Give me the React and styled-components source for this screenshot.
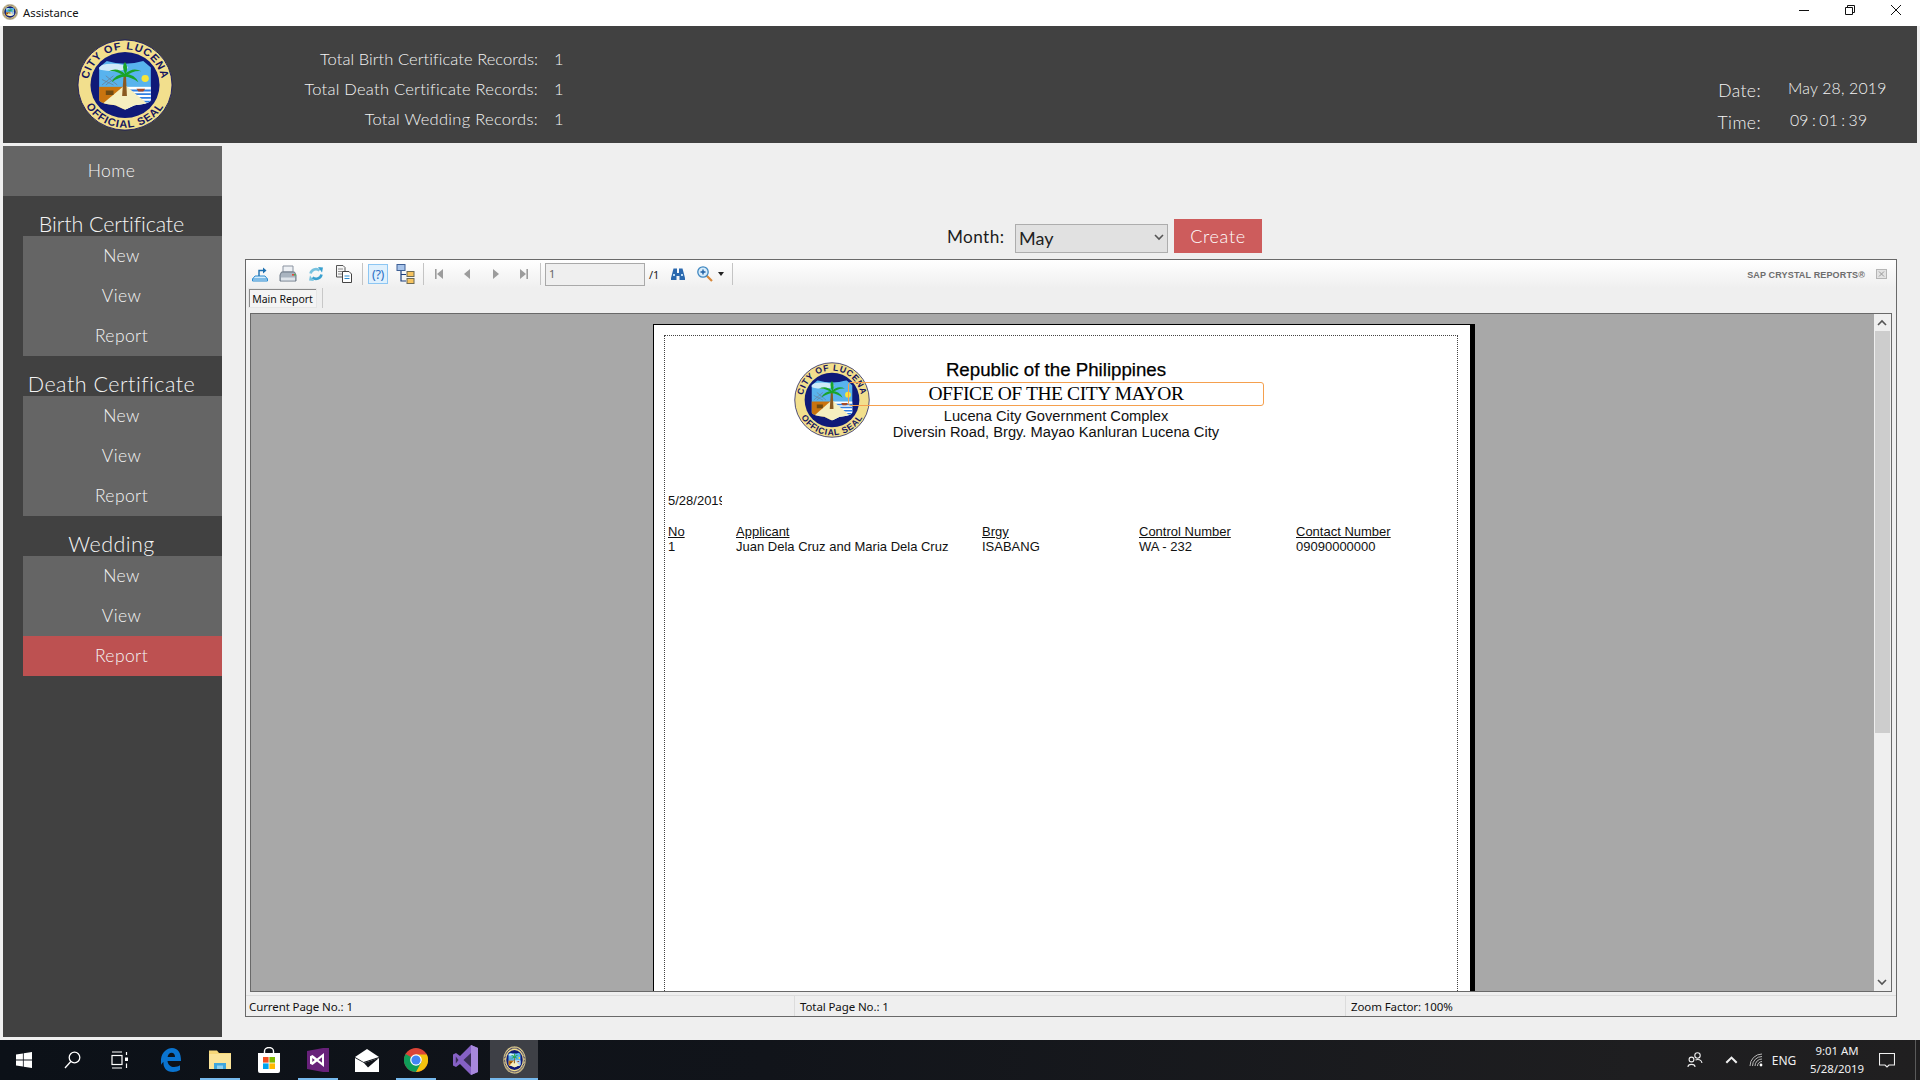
import React, { useId } from "react";
import styled, { createGlobalStyle } from "styled-components";

const Global = createGlobalStyle`
  html, body { margin: 0; padding: 0; background: #efefef; overflow: hidden; }
  #root { width: 1920px; height: 1080px; }
  * { box-sizing: border-box; }
`;

const GOTHIC = `"Lato", "Open Sans", sans-serif`;
const UI = `"Noto Sans", "Open Sans", sans-serif`;
const ARIAL = `"Liberation Sans", Arial, sans-serif`;

const Screen = styled.div`
  width: 1920px; height: 1080px; display: flex; flex-direction: column;
  background: #efefef; overflow: hidden;
`;
const TitleBar = styled.div`
  height: 26px; flex: none; background: #fff; display: flex; align-items: center;
  padding: 0 1px 2px 2px; font: 11.3px ${UI}; color: #111;
`;
const TitleIcon = styled.span`
  width: 16px; height: 16px; display: block; margin-right: 5px;
`;
const WinControls = styled.div`
  margin-left: auto; display: flex; height: 100%;
`;
const WinBtn = styled.div`
  width: 46px; height: 100%; display: flex; align-items: center; justify-content: center;
  svg { margin-top: -4px; }
`;
const Header = styled.header`
  height: 117px; flex: none; margin: 0 3px 3px; background: #414141; display: flex; align-items: flex-start;
  color: #f4f4f4; font: 300 16.5px ${GOTHIC};
`;
const HeaderLogo = styled.div`
  width: 96px; height: 92px; margin: 13px 0 0 74px; flex: none;
`;
const Stats = styled.div`
  margin-top: 18px; display: grid; grid-template-columns: 365px auto; column-gap: 16px; grid-auto-rows: 30px; align-items: center;
`;
const StatLabel = styled.div`
  text-align: right; letter-spacing: ${p => p.$track}px;
`;
const Clock = styled.div`
  margin: 48px 30px 0 auto; display: grid; grid-template-columns: 44px 99px; column-gap: 27px; grid-auto-rows: 32px; align-items: center;
`;
const ClockLabel = styled.div`
  text-align: right; font-size: 17.5px; letter-spacing: 0.4px;
`;
const ClockValue = styled.div`
  margin-top: -6px; padding-left: ${p => p.$indent || 0}px; font-size: 15.8px; letter-spacing: 0.2px; word-spacing: ${p => p.$words || 0}px; white-space: nowrap;
`;
const Body = styled.div`
  flex: 1; min-height: 0; display: flex;
`;
const Sidebar = styled.nav`
  width: 219px; height: 891px; margin-left: 3px; flex: none; background: #414141; color: #f4f4f4;
`;
const HomeItem = styled.div`
  height: 50px; background: #656565; display: flex; align-items: center; justify-content: center;
  padding: 0 2px 2px 0; font: 300 17.5px ${GOTHIC}; letter-spacing: 0.4px;
`;
const SectionTitle = styled.div`
  height: 40px; display: flex; align-items: flex-end; justify-content: center;
  padding-right: 2px; font: 300 21.5px/23px ${GOTHIC}; letter-spacing: ${p => p.$track}px;
`;
const SubMenu = styled.div`
  margin-left: 20px; background: #656565;
`;
const SubItem = styled.div`
  height: 40px; display: flex; align-items: center; justify-content: center;
  padding: 0 2px 1px 0; font: 300 17.5px ${GOTHIC}; letter-spacing: 0.4px;
  background: ${p => (p.$active ? "#bd5151" : "transparent")};
`;
const Main = styled.main`
  flex: 1; min-width: 0; display: flex; flex-direction: column; padding: 73px 23px 0 23px;
`;
const MonthRow = styled.div`
  height: 34px; flex: none; display: flex; align-items: center; padding-left: 702px; margin-bottom: 6px;
`;
const MonthLabel = styled.div`
  width: 68px; font: 400 17.2px ${GOTHIC}; color: #1c1c1c; letter-spacing: 0.4px;
`;
const Select = styled.div`
  width: 153px; height: 29px; margin-top: 4px; background: #e1e1e1; border: 1px solid #adadad; display: flex; align-items: center;
  justify-content: space-between; padding: 0 3px 1px 3px; font: 400 18px ${GOTHIC}; color: #222;
`;
const CreateBtn = styled.div`
  width: 88px; height: 34px; margin-left: 6px; background: #cd5c5c; color: #fff; display: flex; align-items: center; justify-content: center;
  font: 300 18px ${GOTHIC}; letter-spacing: 0.7px;
`;
const Viewer = styled.section`
  width: 1652px; height: 758px; flex: none; border: 1px solid #696969; display: flex; flex-direction: column;
  background: #efefef;
`;
const Toolbar = styled.div`
  height: 28px; flex: none; display: flex; align-items: center; padding-right: 9px;
  background: linear-gradient(#ffffff, #efefef);
  font: 11px ${UI}; color: #222;
`;
const Tool = styled.div`
  width: ${p => p.$w}px; height: 100%; flex: none; display: flex; align-items: center; justify-content: center;
`;
const ToolSep = styled.div`
  width: ${p => p.$w}px; flex: none; height: 22px; display: flex; justify-content: center;
  &::before { content: ""; width: 1px; height: 100%; background: #c4c4c4; }
`;
const PageInput = styled.div`
  width: 100px; height: 23px; flex: none; border: 1px solid #a9a9a9; background: #efefef; padding-left: 3px; font: 11px/19px ${UI}; color: #666;
`;
const PageTotal = styled.div`
  width: 18px; flex: none; padding-left: 4px; font: 11px ${UI};
`;
const Brand = styled.div`
  margin: 2px 11px 0 auto; font: bold 9px ${ARIAL}; color: #6d6d6d; letter-spacing: 0.15px; white-space: nowrap;
`;
const TabRow = styled.div`
  height: 25px; flex: none; display: flex; padding-left: 2px; align-items: flex-start;
`;
const Tab = styled.div`
  width: 69px; height: 20px; border: 1px solid #e6e6e6; box-shadow: inset 1px 1px 0 #8a8a8a;
  background: #f4f4f4; display: flex; align-items: center; justify-content: center; padding-top: 1px; font: 10.5px ${UI}; color: #111;
`;
const TabSep = styled.div`
  width: 1px; height: 20px; margin-left: 5px; background: #c8c8c8;
`;
const Pane = styled.div`
  height: 679px; flex: none; margin: 0 4px; border: 1px solid #696969; display: flex; overflow: hidden; background: #a8a8a8;
`;
const PaneCanvas = styled.div`
  flex: 1; min-width: 0; padding: 10px 0 0 402px; overflow: hidden;
`;
const Page = styled.div`
  width: 822px; height: 900px; background: #fff; border: 1px solid #000; border-right: 5px solid #000; padding: 10px 10px 0;
`;
const Sheet = styled.div`
  width: 794px; height: 900px; border: 1px dotted #444; padding-left: 3px; font: 13px ${ARIAL}; color: #111;
`;
const ReportHead = styled.div`
  position: relative; height: 104px; margin-left: -3px; padding: 24px 0 0 183px;
`;
const ReportSeal = styled.div`
  position: absolute; left: 129px; top: 26px; width: 76px; height: 76px;
`;
const HeadLines = styled.div`
  position: relative; width: 416px; display: flex; flex-direction: column; align-items: center;
`;
const Republic = styled.div`
  height: 22px; font: 18.7px/20px ${ARIAL}; -webkit-text-stroke: 0.25px #000; color: #000; white-space: nowrap;
`;
const OfficeBox = styled.div`
  width: 416px; height: 24px; border: 1px solid #f5a04e; border-radius: 3px; display: flex; align-items: center; justify-content: center;
  font: 19.5px "Liberation Serif", "Times New Roman", serif; color: #000; letter-spacing: -0.4px; white-space: nowrap;
`;
const AddressLine = styled.div`
  height: 16px; margin-top: ${p => p.$top || 0}px; font: 14.7px/17px ${ARIAL}; color: #111; white-space: nowrap;
`;
const ReportDate = styled.div`
  width: 54px; height: 14px; margin-top: 54px; overflow: hidden; white-space: nowrap; line-height: 14px;
`;
const Row = styled.div`
  display: grid; grid-template-columns: 68px 246px 157px 157px 1fr; height: 14px; line-height: 14px; white-space: nowrap;
  margin-top: ${p => p.$top || 0}px;
  text-decoration: ${p => (p.$head ? "underline" : "none")};
`;
const Scrollbar = styled.div`
  width: 17px; flex: none; background: #efefef; display: flex; flex-direction: column; align-items: center; border-right: 1px solid #efefef;
`;
const ScrollBtn = styled.div`
  height: 17px; flex: none; display: flex; align-items: center; justify-content: center; margin-top: ${p => p.$auto ? "auto" : "0"};
`;
const Thumb = styled.div`
  width: 15px; height: 402px; background: #cdcdcd;
`;
const StatusBar = styled.div`
  flex: 1; display: grid; grid-template-columns: 548px 551px 1fr; margin-top: 3px; border-top: 1px solid #dcdcdc; font: 11.5px ${UI}; color: #111; align-items: stretch;
`;
const StatusCell = styled.div`
  display: flex; align-items: center; padding-left: 3px; letter-spacing: -0.1px;
  & + & { border-left: 1px solid #dcdcdc; padding-left: 5px; }
`;
const Gap = styled.div`
  height: 3px; flex: none; background: #efefef;
`;
const Taskbar = styled.footer`
  height: 40px; flex: none; display: flex; align-items: stretch;
  background: linear-gradient(90deg, #0c1118 0%, #11141a 40%, #1e1e20 85%, #201f20 100%);
  color: #f0f0f0; font: 12px ${UI};
`;
const TaskSlot = styled.div`
  position: relative; width: ${p => p.$w}px; flex: none; display: flex; align-items: center; justify-content: center;
  background: ${p => (p.$active ? "#3e4046" : "transparent")};
  margin-left: ${p => p.$ml || 0}px;
`;
const TaskSeal = styled.span`
  width: 23px; height: 28px; display: block;
`;
const RunMark = styled.span`
  position: absolute; bottom: 0; left: 50%; transform: translateX(-50%); width: ${p => p.$full ? "100%" : "40px"}; height: 2px; background: #76b9ed;
`;
const Tray = styled.div`
  margin-left: auto; display: flex; align-items: stretch;
`;
const TrayClock = styled.div`
  width: 74px; display: flex; flex-direction: column; align-items: center; justify-content: center; font: 11.4px/18px ${UI}; white-space: nowrap;
`;
const DesktopEdge = styled.div`
  width: 5px; margin-left: 15px; border-left: 1px solid #5a5a5a;
`;

function Seal({ plain }) {
  const id = useId().replace(/[^a-zA-Z0-9]/g, "");
  return (
    <svg viewBox="0 0 100 100" width="100%" height="100%" preserveAspectRatio="none" style={{ display: "block" }}>
      <defs>
        <clipPath id={`s${id}`}>
          <path d="M23 31 L31 24 Q50 30 69 24 L77 31 L77 66 Q77 70 60 72 L50 77 L40 72 Q23 70 23 66 Z" />
        </clipPath>
        <path id={`t${id}`} d="M12 56 A38.5 38.5 0 1 1 88 56" />
        <path id={`b${id}`} d="M3.5 50 A46.5 46.5 0 0 0 96.5 50" />
      </defs>
      <circle cx="50" cy="50" r="49" fill="#f2df8d" stroke="#1c1c5e" strokeWidth="1" />
      <circle cx="50" cy="50" r="36" fill="#0f1a78" />
      {plain ? (
        <circle cx="50" cy="50" r="42.5" fill="none" stroke="#1c1c5e" strokeWidth="5" strokeDasharray="3 2" />
      ) : (
        <g fontFamily={ARIAL} fontWeight="bold" fontSize="11.5" fill="#15155f">
          <text letterSpacing="0.9"><textPath href={`#t${id}`} startOffset="50%" textAnchor="middle">CITY OF LUCENA</textPath></text>
          <text letterSpacing="0.9"><textPath href={`#b${id}`} startOffset="50%" textAnchor="middle">OFFICIAL SEAL</textPath></text>
        </g>
      )}
      <g clipPath={`url(#s${id})`}>
        <rect x="20" y="20" width="60" height="60" fill="#58b3ee" />
        <ellipse cx="37" cy="31" rx="16" ry="4" fill="#cfeaf8" />
        <rect x="20" y="52" width="30" height="30" fill="#c9740f" />
        <rect x="50" y="52" width="30" height="30" fill="#fff" />
        <path d="M50 56h30M50 60h30M50 64h30M50 68h30" stroke="#2f7fe0" strokeWidth="2" />
        <path d="M50 50 L82 78 L18 78 Z" fill="#f5efc0" />
        <path d="M26 50 L38 40 M30 50 L40 42 M26 44 L38 50 M30 40 L42 50" stroke="#6b7d92" strokeWidth="0.8" />
        <circle cx="71" cy="43" r="3.8" fill="#f6e53a" />
        <path d="M62 54h9l-2 3h-5z" fill="#a34a2a" />
        <path d="M30 56h8v5h-8z" fill="#6e4a12" />
      </g>
      <path d="M48.5 40 L47 62 L52 62 L51 40 Z" fill="#8a5a20" />
      <g fill="#19a42a">
        <path d="M50 38 Q42 30 33 35 Q42 34 50 41 Z" />
        <path d="M50 38 Q58 30 67 35 Q58 34 50 41 Z" />
        <path d="M50 38 Q40 38 36 47 Q44 41 50 41 Z" />
        <path d="M50 38 Q60 38 64 47 Q56 41 50 41 Z" />
        <path d="M50 38 Q46 29 50 25 Q54 30 51 38 Z" />
      </g>
    </svg>
  );
}

const ExportIcon = () => (
  <svg width="20" height="20" viewBox="0 0 20 20" fill="none">
    <path d="M2.5 15 L5 12 H15 L17.5 15 V17 H2.5 Z" fill="#d5ecfb" stroke="#2b8bd0" />
    <path d="M2.5 15 H17.5" stroke="#2b8bd0" />
    <path d="M9 12 V6.5 H13" stroke="#1c6fb0" strokeWidth="1.4" />
    <path d="M13 3.5 L16.5 6.5 L13 9.5 Z" fill="#1c6fb0" />
  </svg>
);
const PrintIcon = () => (
  <svg width="20" height="20" viewBox="0 0 20 20">
    <path d="M5 2 H15 V8 H5 Z" fill="#eef1f5" stroke="#8a93a0" />
    <path d="M3.5 8 H16.5 L18 11 V17 H2 V11 Z" fill="#a9b4c0" stroke="#6f7b88" />
    <rect x="3" y="13.5" width="14" height="3" fill="#dfe5eb" />
    <rect x="14" y="10" width="2" height="1.6" fill="#e2483c" />
    <rect x="16" y="10" width="1.6" height="1.6" fill="#4caf50" />
  </svg>
);
const RefreshIcon = () => (
  <svg width="20" height="20" viewBox="0 0 20 20" fill="none" stroke="#39a0cf" strokeWidth="2.6">
    <path d="M4.5 9.5 A5.5 5.5 0 0 1 13.5 6.5" stroke="#78c2df" />
    <path d="M12 3 L17 3.5 L16 8.5 Z" fill="#39a0cf" stroke="none" />
    <path d="M15.5 10.5 A5.5 5.5 0 0 1 6.5 13.5" />
    <path d="M8 17 L3 16.5 L4 11.5 Z" fill="#78c2df" stroke="none" />
  </svg>
);
const CopyIcon = () => (
  <svg width="20" height="20" viewBox="0 0 20 20">
    <path d="M2.5 1.5 H9 L11 3.5 V13 H2.5 Z" fill="#f5f5f5" stroke="#555" />
    <path d="M4 5h5M4 7.5h5M4 10h4" stroke="#8a8a8a" />
    <path d="M8.5 7.5 H15 L17.5 10 V18.5 H8.5 Z" fill="#fff" stroke="#444" />
    <path d="M10.5 12h5M10.5 14.5h5" stroke="#2b8bd0" />
  </svg>
);
const HelpBox = styled.div`
  width: 20px; height: 20px; border: 1px solid #8cc6f3; background: #dff0fd; color: #2d6fc4; display: flex; align-items: center; justify-content: center;
  font: 12.5px ${UI}; letter-spacing: -0.3px;
`;
const TreeIcon = () => (
  <svg width="20" height="22" viewBox="0 0 20 22">
    <path d="M5 8 V18 H10 M5 11.5 H10" fill="none" stroke="#1d3f7a" strokeWidth="1.2" />
    <rect x="1" y="1.5" width="8" height="6" fill="#a8c4ea" stroke="#3d5f95" />
    <rect x="11" y="8.5" width="7" height="5" fill="#f6c35f" stroke="#6c6a55" />
    <rect x="11" y="15.5" width="7" height="5" fill="#f6c35f" stroke="#6c6a55" />
  </svg>
);
const NavIcon = ({ dir, bar }) => (
  <svg width="10" height="12" viewBox="0 0 10 12" fill="#9c9c9c">
    <g transform={dir === "l" ? "" : "translate(10 0) scale(-1 1)"}>
      {bar && <rect x="1" y="1" width="1.6" height="10" />}
      <path d={bar ? "M9 1 V11 L3 6 Z" : "M8 1 V11 L2 6 Z"} />
    </g>
  </svg>
);
const BinocularIcon = () => (
  <svg width="16" height="16" viewBox="0 0 16 16" fill="#2a68ae">
    <path d="M3.5 2.5 H7 V7 H9 V2.5 H12.5 L15 12 V14 H9.5 V10 H6.5 V14 H1 V12 Z" />
    <path d="M3 9h2M11 9h2" stroke="#bcdcf6" strokeWidth="2" />
  </svg>
);
const ZoomIcon = () => (
  <svg width="18" height="18" viewBox="0 0 18 18" fill="none">
    <path d="M10 10 L16 16" stroke="#d8883a" strokeWidth="2.2" />
    <circle cx="7" cy="7" r="5.2" fill="#d8ecfa" stroke="#3f87c0" strokeWidth="1.3" />
    <path d="M4.5 7 H9.5 M7 4.5 V9.5" stroke="#1c5ea4" strokeWidth="1.4" />
  </svg>
);
const Caret = () => (
  <svg width="6" height="4" viewBox="0 0 6 4"><path d="M0 0 H6 L3 4 Z" fill="#222" /></svg>
);
const Chevron = ({ up, color = "#555", w = 10 }) => (
  <svg width={w} height={w * 0.7} viewBox="0 0 10 7" fill="none" stroke={color} strokeWidth="1.6">
    <path d={up ? "M1 6 L5 2 L9 6" : "M1 1 L5 5 L9 1"} />
  </svg>
);

const WinLogo = () => (
  <svg width="16" height="16" viewBox="0 0 16 16" fill="#fff">
    <path d="M0 2.4 L6.9 1.4 V7.6 H0 Z M7.7 1.3 L16 0 V7.6 H7.7 Z M0 8.4 H6.9 V14.6 L0 13.6 Z M7.7 8.4 H16 V16 L7.7 14.7 Z" />
  </svg>
);
const SearchGlyph = () => (
  <svg width="17" height="18" viewBox="0 0 17 18" fill="none" stroke="#fff" strokeWidth="1.3">
    <circle cx="10.5" cy="6.5" r="5.3" />
    <path d="M6.8 10.5 L1 17" />
  </svg>
);
const TaskViewGlyph = () => (
  <svg width="17" height="18" viewBox="0 0 17 18" fill="none" stroke="#fff" strokeWidth="1.2">
    <path d="M1 1 H11 M1 17 H11" />
    <rect x="1" y="4.5" width="10" height="9" />
    <rect x="14" y="6.5" width="3" height="3.5" fill="#fff" stroke="none" />
    <path d="M15.5 1 V4 M15.5 12.5 V17" />
  </svg>
);
const EdgeGlyph = () => (
  <svg width="22" height="24" viewBox="0 0 22 24">
    <path fill="#0a74d0" d="M1 11 C2 4 7 0 12 0 C18 0 21 5 21 13 H7.5 C8 17 11 19 14 19 C16.5 19 18.5 18.3 20 17.3 V22 C18 23.3 15.5 24 13 24 C6 24 3 19 3.5 14 C2.6 14.7 1.6 15.6 1 17 Z M7.6 9 H15 C15 6.4 13.8 4.7 11.5 4.7 C9.5 4.7 8 6.4 7.6 9 Z" />
  </svg>
);
const FolderGlyph = () => (
  <svg width="22" height="22" viewBox="0 0 22 22">
    <path d="M0 1.5 H8 L10 4 H22 V20 H0 Z" fill="#f6d778" />
    <path d="M0 5 H22 V20 H0 Z" fill="#fbe499" />
    <path d="M5 20 V14 H17 V20 Z" fill="#3fa6dd" />
    <path d="M8 20 V16.5 H14 V20 Z" fill="#8ed0ef" />
  </svg>
);
const StoreGlyph = () => (
  <svg width="24" height="26" viewBox="0 0 24 26">
    <path d="M7.5 6 V4 A4.5 3.5 0 0 1 16.5 4 V6" fill="none" stroke="#fff" strokeWidth="1.4" />
    <path d="M1 6 H23 V24 Q23 26 21 26 H3 Q1 26 1 24 Z" fill="#fff" />
    <rect x="6" y="10" width="5.6" height="5.6" fill="#f25022" />
    <rect x="12.4" y="10" width="5.6" height="5.6" fill="#7fba00" />
    <rect x="6" y="16.4" width="5.6" height="5.6" fill="#00a4ef" />
    <rect x="12.4" y="16.4" width="5.6" height="5.6" fill="#ffb900" />
  </svg>
);
const VSDarkGlyph = () => (
  <svg width="22" height="24" viewBox="0 0 22 24">
    <path d="M0 3 L16 0 H22 V24 H16 L0 21 Z" fill="#68217a" />
    <path d="M17 5 L10 10.5 L5.5 7 L3 8.2 V15.8 L5.5 17 L10 13.5 L17 19 Z M5.3 10 L7.8 12 L5.3 14 Z M11.5 12 L15 9.3 V14.7 Z" fill="#fff" fillRule="evenodd" />
  </svg>
);
const MailGlyph = () => (
  <svg width="24" height="23" viewBox="0 0 24 23">
    <path d="M0 8 L12 0 L24 8 L8.5 13 Z" fill="#fff" />
    <path d="M0 9 L9 14 L24 9 V23 H0 Z" fill="#fff" />
    <path d="M9 14 L24 9 L13 18.5 Z" fill="#11141a" />
  </svg>
);
const ChromeGlyph = () => (
  <svg width="24" height="24" viewBox="0 0 24 24">
    <circle cx="12" cy="12" r="12" fill="#db4437" />
    <path d="M12 12 L1.6 6 A12 12 0 0 0 12 24 L18 14 Z" fill="#0f9d58" />
    <path d="M12 6.5 H22.8 A12 12 0 0 1 12 24 L18 13 Z" fill="#f4c20d" />
    <circle cx="12" cy="12" r="5.8" fill="#fff" />
    <circle cx="12" cy="12" r="4.6" fill="#4285f4" />
  </svg>
);
const VSGlyph = () => (
  <svg width="25" height="30" viewBox="0 0 25 30">
    <path d="M18 0 L25 3 V27 L18 30 L7 19 L3 22 L0 20.5 V9.5 L3 8 L7 11 Z" fill="#8661c5" />
    <path d="M18 8 V22 L10.5 15 Z M2.8 11.5 L5.5 15 L2.8 18.5 Z" fill="#11141a" opacity=".65" />
    <path d="M18 0 L25 3 V27 L18 30 Z" fill="#a788dc" />
  </svg>
);
const PeopleGlyph = () => (
  <svg width="16" height="16" viewBox="0 0 16 16" fill="none" stroke="#f0f0f0" strokeWidth="1.1">
    <circle cx="10.5" cy="3.5" r="2.7" />
    <circle cx="4.5" cy="7.5" r="2.4" />
    <path d="M1 15 C1 11.5 8 11.5 8 15 M8.5 8 C11 6.8 14.5 7.8 15 11" />
  </svg>
);
const WifiGlyph = () => (
  <svg width="14" height="14" viewBox="0 0 14 14" fill="none" stroke="#b8b8b8" strokeWidth="1">
    <path d="M1 13 A12 12 0 0 1 13 1 M3.5 13 A9.5 9.5 0 0 1 13 3.5 M6 13 A7 7 0 0 1 13 6 M8.5 13 A4.5 4.5 0 0 1 13 8.5" />
    <circle cx="12" cy="12" r="1.4" fill="#fff" stroke="none" />
  </svg>
);
const BubbleGlyph = () => (
  <svg width="16" height="15" viewBox="0 0 16 15" fill="none" stroke="#f0f0f0" strokeWidth="1.1">
    <path d="M.5.5 H15.5 V12 H10 L8 14 L6 12 H.5 Z" />
  </svg>
);

const SECTIONS = [
  { title: "Birth Certificate", track: -0.1 },
  { title: "Death Certificate", track: 0.5 },
  { title: "Wedding", track: 0.45, active: "Report" },
];

export default function App() {
  return (
    <Screen>
      <Global />
      <TitleBar>
        <TitleIcon><Seal plain /></TitleIcon>
        Assistance
        <WinControls>
          <WinBtn>
            <svg width="10" height="1" viewBox="0 0 10 1"><path d="M0 .5 H10" stroke="#111" /></svg>
          </WinBtn>
          <WinBtn>
            <svg width="10" height="10" viewBox="0 0 10 10" fill="none" stroke="#111"><path d="M.5 2.5 H7.5 V9.5 H.5 Z M2.5 2.5 V.5 H9.5 V7.5 H7.5" /></svg>
          </WinBtn>
          <WinBtn>
            <svg width="10" height="10" viewBox="0 0 10 10" stroke="#111"><path d="M0 0 L10 10 M10 0 L0 10" /></svg>
          </WinBtn>
        </WinControls>
      </TitleBar>
      <Header>
        <HeaderLogo><Seal /></HeaderLogo>
        <Stats>
          <StatLabel $track={0.06}>Total Birth Certificate Records:</StatLabel><div>1</div>
          <StatLabel $track={0.26}>Total Death Certificate Records:</StatLabel><div>1</div>
          <StatLabel $track={0.3}>Total Wedding Records:</StatLabel><div>1</div>
        </Stats>
        <Clock>
          <ClockLabel>Date:</ClockLabel><ClockValue>May 28, 2019</ClockValue>
          <ClockLabel>Time:</ClockLabel><ClockValue $indent={2} $words={-1.2}>09 : 01 : 39</ClockValue>
        </Clock>
      </Header>
      <Body>
        <Sidebar>
          <HomeItem>Home</HomeItem>
          {SECTIONS.map(s => (
            <div key={s.title}>
              <SectionTitle $track={s.track}>{s.title}</SectionTitle>
              <SubMenu>
                {["New", "View", "Report"].map(i => (
                  <SubItem key={i} $active={s.active === i}>{i}</SubItem>
                ))}
              </SubMenu>
            </div>
          ))}
        </Sidebar>
        <Main>
          <MonthRow>
            <MonthLabel>Month:</MonthLabel>
            <Select>May<Chevron color="#555" /></Select>
            <CreateBtn>Create</CreateBtn>
          </MonthRow>
          <Viewer>
            <Toolbar>
              <Tool $w={28}><ExportIcon /></Tool>
              <Tool $w={28}><PrintIcon /></Tool>
              <Tool $w={28}><RefreshIcon /></Tool>
              <Tool $w={28}><CopyIcon /></Tool>
              <ToolSep $w={8} />
              <Tool $w={24}><HelpBox>(?)</HelpBox></Tool>
              <Tool $w={32}><TreeIcon /></Tool>
              <ToolSep $w={2} />
              <Tool $w={30}><NavIcon dir="l" bar /></Tool>
              <Tool $w={26}><NavIcon dir="l" /></Tool>
              <Tool $w={32}><NavIcon dir="r" /></Tool>
              <Tool $w={24}><NavIcon dir="r" bar /></Tool>
              <ToolSep $w={9} />
              <PageInput>1</PageInput>
              <PageTotal>/1</PageTotal>
              <Tool $w={30}><BinocularIcon /></Tool>
              <Tool $w={24}><ZoomIcon /></Tool>
              <Tool $w={8}><Caret /></Tool>
              <ToolSep $w={14} />
              <Brand>SAP CRYSTAL REPORTS®</Brand>
              <svg width="11" height="10" viewBox="0 0 11 10" fill="#e3e3e3" stroke="#b5b5b5"><rect x=".5" y=".5" width="10" height="9" /><path d="M3 2.5 L8 7.5 M8 2.5 L3 7.5" stroke="#999" /></svg>
            </Toolbar>
            <TabRow>
              <Tab>Main Report</Tab>
              <TabSep />
            </TabRow>
            <Pane>
              <PaneCanvas>
                <Page>
                  <Sheet>
                    <ReportHead>
                      <ReportSeal><Seal /></ReportSeal>
                      <HeadLines>
                        <Republic>Republic of the Philippines</Republic>
                        <OfficeBox>OFFICE OF THE CITY MAYOR</OfficeBox>
                        <AddressLine $top={2}>Lucena City Government Complex</AddressLine>
                        <AddressLine>Diversin Road, Brgy. Mayao Kanluran Lucena City</AddressLine>
                      </HeadLines>
                    </ReportHead>
                    <ReportDate>5/28/2019</ReportDate>
                    <Row $head $top={17}>
                      <span>No</span><span>Applicant</span><span>Brgy</span><span>Control Number</span><span>Contact Number</span>
                    </Row>
                    <Row $top={1}>
                      <span>1</span><span>Juan Dela Cruz and Maria Dela Cruz</span><span>ISABANG</span><span>WA - 232</span><span>09090000000</span>
                    </Row>
                  </Sheet>
                </Page>
              </PaneCanvas>
              <Scrollbar>
                <ScrollBtn><Chevron up /></ScrollBtn>
                <Thumb />
                <ScrollBtn $auto><Chevron /></ScrollBtn>
              </Scrollbar>
            </Pane>
            <StatusBar>
              <StatusCell>Current Page No.: 1</StatusCell>
              <StatusCell>Total Page No.: 1</StatusCell>
              <StatusCell>Zoom Factor: 100%</StatusCell>
            </StatusBar>
          </Viewer>
          <Gap />
        </Main>
      </Body>
      <Taskbar>
        <TaskSlot $w={48}><WinLogo /></TaskSlot>
        <TaskSlot $w={48}><SearchGlyph /></TaskSlot>
        <TaskSlot $w={47}><TaskViewGlyph /></TaskSlot>
        <TaskSlot $w={49} $ml={3}><EdgeGlyph /></TaskSlot>
        <TaskSlot $w={49}><FolderGlyph /><RunMark /></TaskSlot>
        <TaskSlot $w={49}><StoreGlyph /></TaskSlot>
        <TaskSlot $w={49}><VSDarkGlyph /><RunMark /></TaskSlot>
        <TaskSlot $w={49}><MailGlyph /></TaskSlot>
        <TaskSlot $w={49}><ChromeGlyph /><RunMark /></TaskSlot>
        <TaskSlot $w={50}><VSGlyph /></TaskSlot>
        <TaskSlot $w={48} $active>
          <TaskSeal><Seal plain /></TaskSeal>
          <RunMark $full />
        </TaskSlot>
        <Tray>
          <TaskSlot $w={48}><PeopleGlyph /></TaskSlot>
          <TaskSlot $w={25}><Chevron up color="#f0f0f0" w={13} /></TaskSlot>
          <TaskSlot $w={24}><WifiGlyph /></TaskSlot>
          <TaskSlot $w={32}>ENG</TaskSlot>
          <TrayClock><span>9:01 AM</span><span>5/28/2019</span></TrayClock>
          <TaskSlot $w={26}><BubbleGlyph /></TaskSlot>
          <DesktopEdge />
        </Tray>
      </Taskbar>
    </Screen>
  );
}
